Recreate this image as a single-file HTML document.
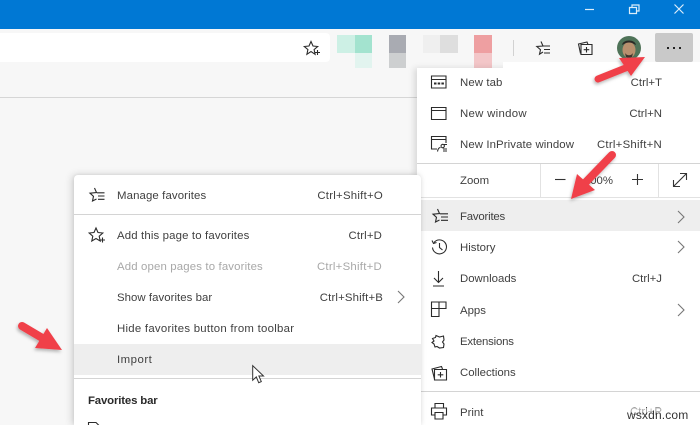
<!DOCTYPE html>
<html><head><meta charset="utf-8"><style>
html,body{margin:0;padding:0;width:700px;height:425px;overflow:hidden;background:#f7f7f7}
body{position:relative;font-family:"Liberation Sans",sans-serif;font-size:11.4px;color:#404040}
#w{position:absolute;left:0;top:0;width:700px;height:425px;overflow:hidden;filter:blur(.3px)}
.a{position:absolute}
.t{position:absolute;white-space:nowrap;line-height:14px;height:14px}
.r{position:absolute;white-space:nowrap;line-height:14px;height:14px;text-align:right}
.d{color:#a8a8a8}
.l{position:absolute;background:#d4d4d4;height:1px}
svg{position:absolute;overflow:visible}
svg.i{fill:none;stroke:#2b2b2b;stroke-width:1.1}
</style></head><body><div id="w">
<div class="a" style="left:0;top:0;width:700px;height:29px;background:#0078d4"></div>
<svg style="left:580px;top:0" width="120" height="29" fill="none" stroke="#dcedf9" stroke-width="1.2">
<path d="M5 9.500H14"/><path d="M49.500 7.500h7v6h-7zM52 7.500V5h7v6h-2.500"/><path d="M94.500 4.500L103.500 13.500M103.500 4.500L94.500 13.500"/>
</svg>
<div class="a" style="left:0;top:29px;width:700px;height:68px;background:#f7f7f7"></div>
<div class="a" style="left:0;top:97px;width:417px;height:1px;background:#d6d6d6"></div>
<div class="a" style="left:0;top:33px;width:330px;height:29px;background:#fff;border-radius:0 4px 4px 0"></div>
<svg class="i" style="left:303px;top:40px" width="18" height="16"><path d="M8 1.500l2 4.500 4.700.5-3.600 3.100 1 4.700L8 11.500l-4.100 2.800 1-4.700L1.300 6.500 6 6z"/><path d="M12 12.500h5M14.500 10v5"/></svg>
<!-- blurred tiles -->
<div class="a" style="left:337px;top:35px;width:18px;height:18px;background:#cdf0e5"></div>
<div class="a" style="left:355px;top:35px;width:17px;height:18px;background:#a3e3cf"></div>
<div class="a" style="left:355px;top:53px;width:17px;height:15px;background:#e2f4ef"></div>
<div class="a" style="left:389px;top:35px;width:17px;height:18px;background:#a9abb2"></div>
<div class="a" style="left:389px;top:53px;width:17px;height:15px;background:#cdcfd0"></div>
<div class="a" style="left:423px;top:35px;width:17px;height:18px;background:#efefef"></div>
<div class="a" style="left:440px;top:35px;width:18px;height:18px;background:#dedede"></div>
<div class="a" style="left:474px;top:35px;width:18px;height:18px;background:#ee9fa1"></div>
<div class="a" style="left:474px;top:53px;width:18px;height:15px;background:#f3c6c8"></div>
<div class="a" style="left:513px;top:40px;width:1px;height:16px;background:#d2d2d2"></div>
<svg class="i" style="left:534px;top:40px" width="18" height="16" stroke-width="1.2"><path d="M7 1.500L9 6l-6.200.5 3.700 3.200-1 4.500L9 12M9 6h7M10 9.500h6M10 13h6"/></svg>
<svg class="i" style="left:577px;top:39px" width="18" height="18" stroke-width="1.2"><path d="M3.500 14.500L1.500 5 10 3l1 2.500"/><path d="M4 5.500h11v10H4z"/><path d="M9.500 8v5.500M6.700 10.700h5.600"/></svg>
<!-- avatar -->
<svg style="left:617px;top:36px" width="24" height="24">
<circle cx="12" cy="12" r="12" fill="#4f7358"/>
<ellipse cx="12" cy="14" rx="6.500" ry="8" fill="#b9906e"/>
<path d="M5 9c1-6 13-6 14 0l-2-1c-3-2-7-2-10 0z" fill="#2c2a26"/>
<path d="M8 17c2 3 6 3 8 0l-1 4c-2 1-4 1-6 0z" fill="#3d342c"/>
</svg>
<div class="a" style="left:655px;top:33px;width:38px;height:29px;background:#c9c9c9;border-radius:2px"></div>
<div class="a" style="left:667px;top:47px;width:2px;height:2px;background:#222"></div>
<div class="a" style="left:673px;top:47px;width:2px;height:2px;background:#222"></div>
<div class="a" style="left:679px;top:47px;width:2px;height:2px;background:#222"></div>

<!-- main menu -->
<div class="a" style="left:417px;top:68px;width:283px;height:357px;background:#fff;box-shadow:-3px 0 6px rgba(0,0,0,.12)"></div>
<div class="a" style="left:503px;top:62px;width:197px;height:8px;background:#fff"></div>

<svg class="i" style="left:431px;top:75px" width="16" height="14" stroke-width="1.2"><path d="M.5 1h14.500v12H.5zM.5 4.500h14.500"/><path d="M3 8.500h2.500M6.700 8.500h2.500M10.400 8.500h2.500" stroke-width="2"/></svg>
<div class="t" style="left:460px;top:76px;letter-spacing:.1px">New tab</div><div class="r" style="right:38px;top:76px">Ctrl+T</div>

<svg class="i" style="left:431px;top:107px" width="16" height="13" stroke-width="1.2"><path d="M.5.500h14.500v12H.5zM.5 3.500h14.500"/></svg>
<div class="t" style="left:460px;top:107px;letter-spacing:.3px">New window</div><div class="r" style="right:38px;top:107px">Ctrl+N</div>

<svg class="i" style="left:431px;top:136px" width="18" height="17" stroke-width="1.1"><path d="M6 13H.5V.500h14.500V7M.5 3.500h14.500"/><path d="M6.500 15.500c.5-3 2-4 3-4M10 10a1.700 1.700 0 1 1 0 .1M12 13h4M12 15h4M13 8.500h3"/></svg>
<div class="t" style="left:460px;top:138px;letter-spacing:.1px">New InPrivate window</div><div class="r" style="right:38px;top:138px;letter-spacing:.25px">Ctrl+Shift+N</div>

<div class="l" style="left:417px;top:163px;width:283px"></div>
<div class="t" style="left:460px;top:174px">Zoom</div>
<div class="a" style="left:540px;top:164px;width:1px;height:33px;background:#e2e2e2"></div>
<div class="a" style="left:658px;top:164px;width:1px;height:33px;background:#e2e2e2"></div>
<svg style="left:0;top:0" width="700" height="425" fill="none" stroke="#333" stroke-width="1.1">
<path d="M555 179.500H565.500"/><path d="M632 179.500H643M637.500 174v11"/>
<path d="M673.500 186.500L686.500 173.500M680 173.500h6.500v6.500M673.500 180v6.500H680"/>
</svg>
<div class="t" style="left:590px;top:174px;width:23px;overflow:hidden;text-align:right">00%</div>
<div class="l" style="left:417px;top:197px;width:283px;background:#e2e2e2"></div>

<div class="a" style="left:421px;top:200px;width:279px;height:31px;background:#eeeeee"></div>
<svg class="i" style="left:431px;top:208px" width="18" height="16" stroke-width="1.1"><path d="M6.500 1L8.500 5.500 2 6.200l3.500 3.100-1 4.700L8.500 12M9 5.800h8M10 9h7M10 12.300h7"/></svg>
<div class="t" style="left:460px;top:210px;letter-spacing:-.2px">Favorites</div>
<svg class="i" style="left:677px;top:210px" width="8" height="14"><path d="M1 1l6 6-6 6" stroke="#777"/></svg>

<svg class="i" style="left:431px;top:238px" width="17" height="17" stroke-width="1.2"><path d="M3 4.500a7 7 0 1 1-1.500 5M1 2.500l1.500 3 3-1"/><path d="M8.500 5v4.500l3 2.500"/></svg>
<div class="t" style="left:460px;top:241px">History</div>
<svg class="i" style="left:677px;top:240px" width="8" height="14"><path d="M1 1l6 6-6 6" stroke="#777"/></svg>

<svg class="i" style="left:432px;top:271px" width="15" height="16" stroke-width="1.1"><path d="M6.500 0v11M2 7l4.500 4.500L11 7M1 15h11"/></svg>
<div class="t" style="left:460px;top:272px">Downloads</div><div class="r" style="right:38px;top:272px">Ctrl+J</div>

<svg class="i" style="left:431px;top:301px" width="16" height="17" stroke-width="1.2"><path d="M.5 7.500h7.500v8H.5zM8 7.500V1h7v6.500H8zM.5 7.500V1H8"/></svg>
<div class="t" style="left:460px;top:304px">Apps</div>
<svg class="i" style="left:677px;top:303px" width="8" height="14"><path d="M1 1l6 6-6 6" stroke="#777"/></svg>

<svg class="i" style="left:431px;top:334px" width="15" height="16" stroke-width="1.5"><path d="M5 1.500l3.500 1.500 4-1 .5 4-1.500 2 1.500 2-.5 3.500-4 .5-2.500-1.500-2 .5-1-3L1 8.500 3 7 1.500 4.500 4.500 3.500z"/></svg>
<div class="t" style="left:460px;top:335px;letter-spacing:-.2px">Extensions</div>

<svg class="i" style="left:431px;top:364px" width="17" height="17" stroke-width="1.1"><path d="M3.500 15L1 5l9.500-2.500 1 2.500"/><path d="M3.500 5.500h12v10.500h-12z"/><path d="M9.500 8v5.500M6.700 10.800h5.600"/></svg>
<div class="t" style="left:460px;top:366px">Collections</div>

<div class="l" style="left:421px;top:391px;width:279px"></div>
<svg class="i" style="left:431px;top:403px" width="17" height="17" stroke-width="1.2"><path d="M4 5V.500h8.500V5M4 12H.5V5h15v7H12M4 9.500h8v6.500H4z"/></svg>
<div class="t" style="left:460px;top:406px">Print</div>
<div class="r" style="right:38px;top:405px">Ctrl+P</div>
<div class="t" style="left:627px;top:408px;font-size:12px;color:#333;background:rgba(255,255,255,.55);letter-spacing:.15px">wsxdn.com</div>

<!-- favorites menu -->
<div class="a" style="left:74px;top:175px;width:347px;height:250px;background:#fff;border-radius:4px 4px 0 0;box-shadow:-2px 0 8px rgba(0,0,0,.16),0 0 4px rgba(0,0,0,.08)"></div>
<svg class="i" style="left:88px;top:187px" width="18" height="16" stroke-width="1.1"><path d="M6.500 1L8.500 5.500 2 6.200l3.500 3.100-1 4.700L8.500 12M9 5.800h7.500M10 9h6.500M10 12.300h6.500"/></svg>
<div class="t" style="left:117px;top:189px;letter-spacing:.12px">Manage favorites</div><div class="r" style="right:317px;top:189px;letter-spacing:.25px">Ctrl+Shift+O</div>
<div class="l" style="left:74px;top:214px;width:347px"></div>
<svg class="i" style="left:88px;top:227px" width="18" height="16" stroke-width="1.1"><path d="M8 1l2 4.500 4.800.5-3.600 3.200 1 4.800L8 11.500l-4.200 2.500 1-4.800L1.200 6 6 5.500z"/><path d="M12 13h5M14.500 10.500v5"/></svg>
<div class="t" style="left:117px;top:229px;letter-spacing:.15px">Add this page to favorites</div><div class="r" style="right:318px;top:229px;letter-spacing:.15px">Ctrl+D</div>
<div class="t d" style="left:117px;top:260px;letter-spacing:.15px">Add open pages to favorites</div><div class="r d" style="right:318px;top:260px;letter-spacing:.25px">Ctrl+Shift+D</div>
<div class="t" style="left:117px;top:291px;letter-spacing:.05px">Show favorites bar</div><div class="r" style="right:317px;top:291px;letter-spacing:.15px">Ctrl+Shift+B</div>
<svg class="i" style="left:397px;top:290px" width="8" height="14"><path d="M1 1l6 6-6 6" stroke="#777"/></svg>
<div class="t" style="left:117px;top:322px;letter-spacing:.26px">Hide favorites button from toolbar</div>
<div class="a" style="left:74px;top:344px;width:347px;height:31px;background:#eeeeee"></div>
<div class="t" style="left:117px;top:353px;letter-spacing:.5px">Import</div>
<div class="l" style="left:74px;top:378px;width:347px"></div>
<div class="t" style="left:88px;top:394px;font-weight:bold;color:#2a2a2a;letter-spacing:-.15px">Favorites bar</div>
<svg class="i" style="left:88px;top:422px" width="12" height="8"><path d="M.5 8V.5H8l3 3V8"/></svg>

<!-- cursor -->
<svg style="left:252px;top:365px" width="14" height="20"><path d="M.7.700v14.500l3.600-3.300 2.400 5.800 2.600-1.100-2.400-5.600h4.600z" fill="#fff" stroke="#333" stroke-width="1"/></svg>

<!-- arrows -->
<svg style="left:0;top:0" width="700" height="425">
<defs><filter id="s" x="-30%" y="-30%" width="170%" height="170%"><feDropShadow dx="-1" dy="2" stdDeviation="1.500" flood-color="#000" flood-opacity=".28"/></filter></defs>
<g filter="url(#s)">
<g fill="#f0404a" stroke="#f0404a" stroke-linecap="round">
<path d="M598 79L628 67" stroke-width="7" fill="none"/>
<path d="M645 57L619 58 631 76Z" stroke="none"/>
<path d="M612 155L585 183" stroke-width="8" fill="none"/>
<path d="M571 199L577 174 595 190Z" stroke="none"/>
<path d="M22 326L44 339" stroke-width="8" fill="none"/>
<path d="M62 350L47 328 35 348Z" stroke="none"/>
</g>
</g>
</svg>
</div></body></html>
